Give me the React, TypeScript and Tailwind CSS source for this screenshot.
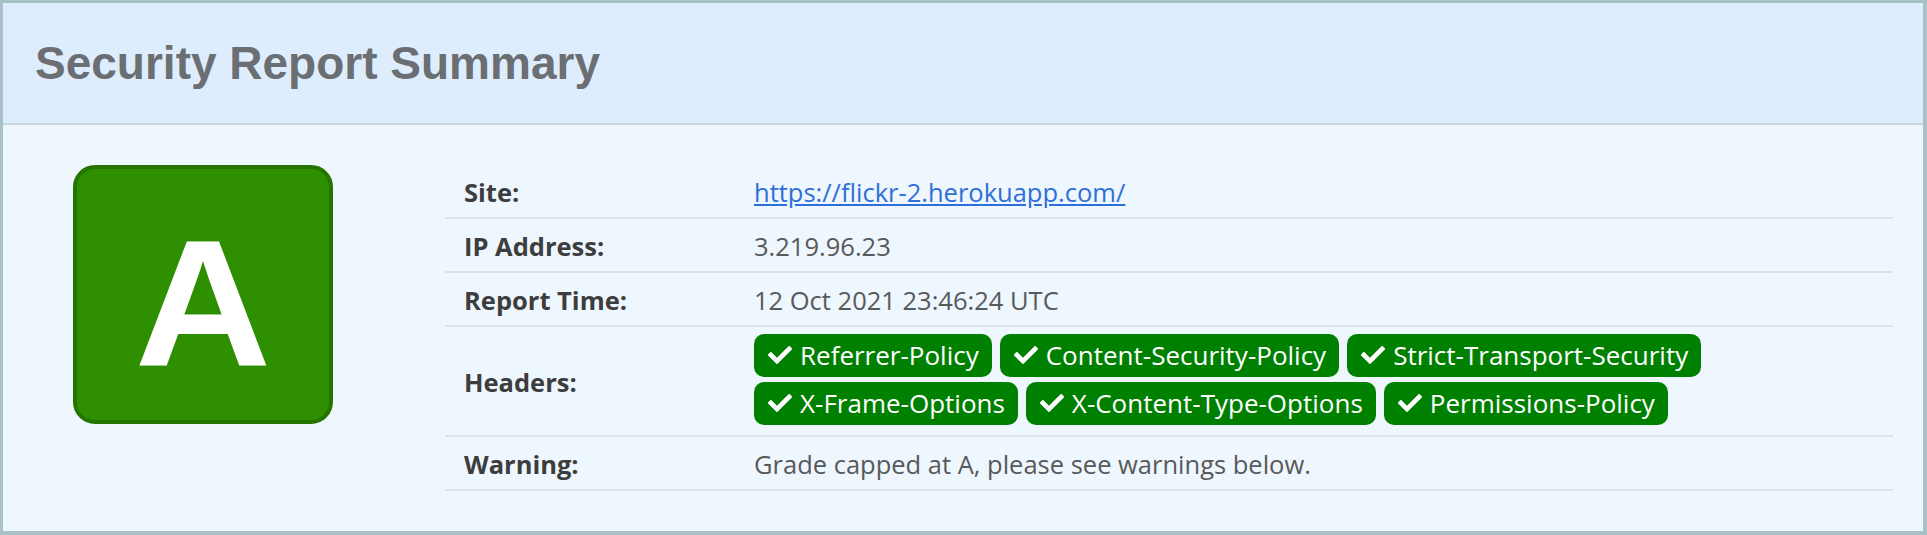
import { FaCheck } from "react-icons/fa";

const headers = [
  "Referrer-Policy",
  "Content-Security-Policy",
  "Strict-Transport-Security",
  "X-Frame-Options",
  "X-Content-Type-Options",
  "Permissions-Policy",
];

function Row({
  label,
  children,
  tall,
}: {
  label: string;
  children: React.ReactNode;
  tall?: boolean;
}) {
  return (
    <div
      className={`flex items-center border-b-2 border-[#dfe2e5] pt-[2px] ${
        tall ? "h-[110px]" : "h-[54px]"
      }`}
    >
      <div className="w-[309px] shrink-0 pl-[19px] font-bold text-[#3d3d3d]">
        {label}
      </div>
      <div className="flex-1 text-[#595959]">{children}</div>
    </div>
  );
}

function Badge({ name }: { name: string }) {
  return (
    <span className="flex h-[43px] items-center gap-[8px] rounded-[10px] bg-[#008000] pr-[13px] pl-[14px] text-[26px] text-white">
      <FaCheck size={24} />
      {name}
    </span>
  );
}

export default function App() {
  return (
    <div className="h-[535px] w-full border-t-[3px] border-r-4 border-b-4 border-l-[3px] border-[#a7c1c4] bg-[#eef6fe]">
      <div className="flex h-[122px] items-center border-b-2 border-[#c6d6dc] bg-[#ddedfd] pl-[32px]">
        <h1 className="font-['Liberation_Sans',Arial,sans-serif] text-[46px] font-bold text-[#6b6e72]">
          Security Report Summary
        </h1>
      </div>

      <div className="flex items-start py-10 pr-[30px] pl-[70px] font-['Open_Sans',sans-serif] text-[25.5px] leading-normal">
        <div className="flex h-[259px] w-[260px] shrink-0 items-center justify-center rounded-[22px] border-4 border-[#267400] bg-[#2e8f00] pt-[18px] font-['Liberation_Sans',Arial,sans-serif] text-[180px] leading-none font-bold text-white">
          <span className="scale-x-105">A</span>
        </div>

        <div className="ml-[112px] flex-1">
          <Row label="Site:">
            <a href="#" className="text-[#2f6fd8] underline">
              https://flickr-2.herokuapp.com/
            </a>
          </Row>
          <Row label="IP Address:">3.219.96.23</Row>
          <Row label="Report Time:">12 Oct 2021 23:46:24 UTC</Row>
          <Row label="Headers:" tall>
            <div className="flex flex-wrap gap-x-[8px] gap-y-[5px] pb-[6px]">
              {headers.map((h) => (
                <Badge key={h} name={h} />
              ))}
            </div>
          </Row>
          <Row label="Warning:">Grade capped at A, please see warnings below.</Row>
        </div>
      </div>
    </div>
  );
}
